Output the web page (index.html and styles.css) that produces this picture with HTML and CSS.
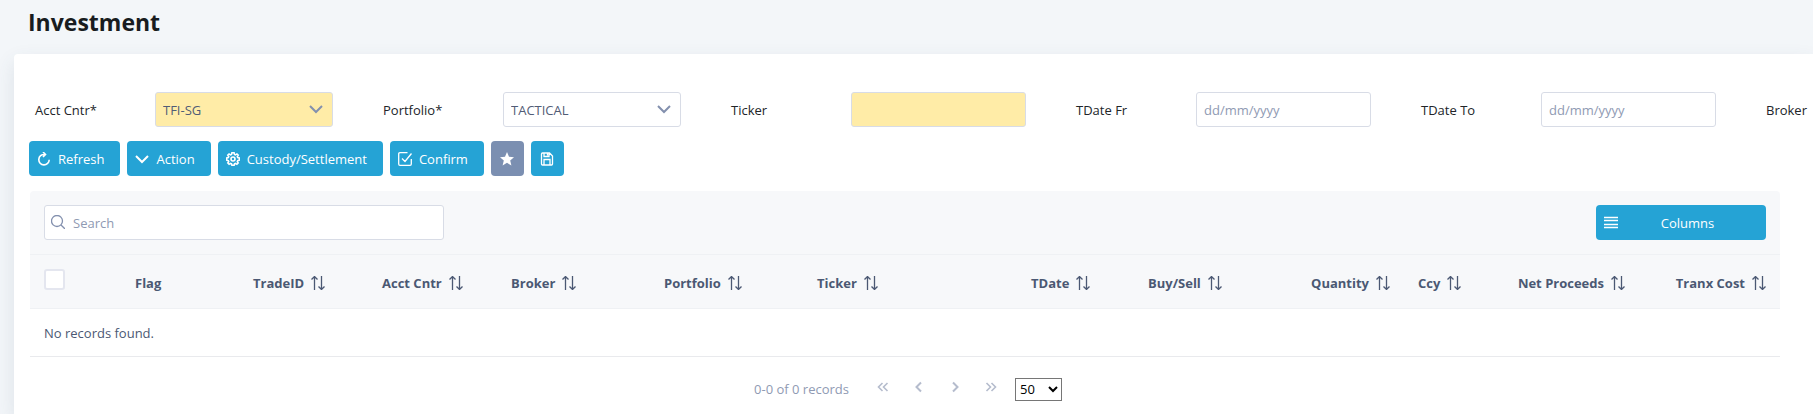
FILE: index.html
```html
<!DOCTYPE html>
<html lang="en">
<head>
    <meta charset="UTF-8">
    <meta name="viewport" content="width=device-width, initial-scale=1.0">
    <title>Investment</title>
    <link rel="stylesheet" href="styles.css">
</head>
<body>
    <!-- shared icons -->
    <svg class="sprite" aria-hidden="true">
        <symbol id="icon-down" viewBox="0 0 14 14"><path d="M1 4l6 6 6-6"/></symbol>
        <symbol id="icon-sort" viewBox="0 0 14 14"><path d="M3.500 14V1M.5 3.500l3-3 3 3M10.500 0v13M7.500 10.500l3 3 3-3"/></symbol>
    </svg>

    <h1 class="page-title">Investment</h1>

    <main class="card">
        <form class="filters">
            <div class="field">
                <label for="acctCntr">Acct Cntr*</label>
                <div class="select-wrap">
                    <select id="acctCntr" class="control select highlight"><option>TFI-SG</option></select>
                    <svg class="icon bold"><use href="#icon-down"/></svg>
                </div>
            </div>
            <div class="field">
                <label for="portfolio">Portfolio*</label>
                <div class="select-wrap">
                    <select id="portfolio" class="control select"><option>TACTICAL</option></select>
                    <svg class="icon bold"><use href="#icon-down"/></svg>
                </div>
            </div>
            <div class="field">
                <label for="ticker">Ticker</label>
                <input type="text" id="ticker" class="control highlight">
            </div>
            <div class="field">
                <label for="tdateFr">TDate Fr</label>
                <input type="text" id="tdateFr" class="control" placeholder="dd/mm/yyyy">
            </div>
            <div class="field">
                <label for="tdateTo">TDate To</label>
                <input type="text" id="tdateTo" class="control" placeholder="dd/mm/yyyy">
            </div>
            <div class="field">
                <label for="broker">Broker</label>
                <input type="text" id="broker" class="control">
            </div>
        </form>

        <div class="toolbar">
            <button type="button" class="btn">
                <svg class="icon medium" viewBox="0 0 14 14"><path d="M7.500 2.500a5.200 5.200 0 1 0 4.700 5.200M6 0l2.500 2.500L6 5"/></svg>
                Refresh
            </button>
            <button type="button" class="btn">
                <svg class="icon bold"><use href="#icon-down"/></svg>
                Action
            </button>
            <button type="button" class="btn">
                <svg class="icon medium" viewBox="0 0 14 14"><path d="M5.900.8h2.200l.4 1.600 1 .4 1.400-.9 1.300 1.300-.9 1.400.4 1 1.600.4v2.200l-1.600.4-.4 1 .9 1.400-1.300 1.300-1.400-.9-1 .4-.4 1.500H5.900l-.4-1.500-1-.4-1.400.9-1.300-1.300.9-1.400-.4-1-1.600-.4V6l1.600-.4.4-1-.9-1.400 1.300-1.300 1.400.9 1-.4z"/><circle cx="7" cy="7" r="2"/></svg>
                Custody/Settlement
            </button>
            <button type="button" class="btn">
                <svg class="icon" viewBox="0 0 14 14"><path d="M9.500.7H2Q.7.700.7 2v10q0 1.300 1.300 1.300h10q1.300 0 1.300-1.300V7M4 6.500l3 3 6.500-8"/></svg>
                Confirm
            </button>
            <button type="button" class="btn btn-icon btn-muted" aria-label="Favourite">
                <svg class="icon solid" viewBox="0 0 14 14"><path d="M7 0l2 4.700 5 .5-3.800 3.300 1.200 5L7 10.800l-4.400 2.700 1.200-5L0 5.200l5-.5z"/></svg>
            </button>
            <button type="button" class="btn btn-icon" aria-label="Save">
                <svg class="icon" viewBox="0 0 14 14"><path d="M1.500 2q0-1 1-1h7l3 3v8q0 1-1 1h-9q-1 0-1-1zM4 1v3.500h5V1M7.500 1.500V3.500M4 13V7.500h6V13"/></svg>
            </button>
        </div>

        <section class="grid">
            <div class="grid-header">
                <div class="search">
                    <svg class="icon" viewBox="0 0 14 14"><circle cx="6" cy="6" r="5.500"/><path d="M10 10l4 4"/></svg>
                    <input type="text" class="control" placeholder="Search" aria-label="Search">
                </div>
                <button type="button" class="btn btn-columns">
                    <svg class="icon" viewBox="0 0 14 14"><path d="M0 1.500h14M0 4.500h14M0 8.500h14M0 11.500h14"/></svg>
                    <span>Columns</span>
                </button>
            </div>
            <table>
                <colgroup>
                    <col class="col-check"><col class="col-flag"><col class="col-id"><col class="col-id">
                    <col class="col-name"><col class="col-name"><col class="col-ticker"><col class="col-date">
                    <col class="col-id"><col class="col-num"><col class="col-ccy"><col class="col-num"><col class="col-num">
                </colgroup>
                <thead>
                    <tr>
                        <th><input type="checkbox" class="check" aria-label="Select all"></th>
                        <th>Flag</th>
                        <th>TradeID<svg class="icon"><use href="#icon-sort"/></svg></th>
                        <th>Acct Cntr<svg class="icon"><use href="#icon-sort"/></svg></th>
                        <th>Broker<svg class="icon"><use href="#icon-sort"/></svg></th>
                        <th>Portfolio<svg class="icon"><use href="#icon-sort"/></svg></th>
                        <th>Ticker<svg class="icon"><use href="#icon-sort"/></svg></th>
                        <th>TDate<svg class="icon"><use href="#icon-sort"/></svg></th>
                        <th>Buy/Sell<svg class="icon"><use href="#icon-sort"/></svg></th>
                        <th class="num">Quantity<svg class="icon"><use href="#icon-sort"/></svg></th>
                        <th>Ccy<svg class="icon"><use href="#icon-sort"/></svg></th>
                        <th class="num">Net Proceeds<svg class="icon"><use href="#icon-sort"/></svg></th>
                        <th class="num">Tranx Cost<svg class="icon"><use href="#icon-sort"/></svg></th>
                    </tr>
                </thead>
                <tbody>
                    <tr><td colspan="13">No records found.</td></tr>
                </tbody>
            </table>
            <div class="pager">
                <span class="pager-info">0-0 of 0 records</span>
                <button type="button" class="page-btn" aria-label="First page" disabled><svg class="icon medium" viewBox="0 0 14 14"><path d="M6.500 3l-4 4 4 4M11.500 3l-4 4 4 4"/></svg></button>
                <button type="button" class="page-btn" aria-label="Previous page" disabled><svg class="icon bold" viewBox="0 0 14 14"><path d="M9 2.500L4.500 7 9 11.500"/></svg></button>
                <button type="button" class="page-btn" aria-label="Next page" disabled><svg class="icon bold" viewBox="0 0 14 14"><path d="M5 2.500L9.500 7 5 11.500"/></svg></button>
                <button type="button" class="page-btn" aria-label="Last page" disabled><svg class="icon medium" viewBox="0 0 14 14"><path d="M2.500 3l4 4-4 4M7.500 3l4 4-4 4"/></svg></button>
                <select class="page-size" aria-label="Rows per page"><option>50</option></select>
            </div>
        </section>
    </main>
</body>
</html>
```

FILE: styles.css
```css
* {
    box-sizing: border-box;
}
body {
    display: flex;
    flex-direction: column;
    min-height: 100vh;
    margin: 0;
    background: #f3f6f9;
    color: #212529;
    font-family: "Open Sans", "Noto Sans", sans-serif;
    font-size: 13px;
    line-height: 20px;
    overflow-x: hidden;
}
button, input, select {
    font: inherit;
}
.sprite {
    display: none;
}
.icon {
    width: 14px;
    height: 14px;
    flex: none;
    fill: none;
    stroke: currentColor;
    stroke-width: 1.3;
}
.icon.medium {
    stroke-width: 1.6;
}
.icon.bold {
    stroke-width: 2;
}
.icon.solid {
    fill: currentColor;
    stroke: none;
}
.page-title {
    margin: 0;
    padding: 6px 28px 16px;
    font-size: 23px;
    line-height: 32px;
    font-weight: 700;
    color: #181c20;
}
.card {
    flex: 1;
    margin-left: 14px;
    padding: 38px 0 0 15px;
    background: #fff;
    border-radius: 4px 0 0 0;
    box-shadow: 0 8px 20px rgba(60, 80, 110, 0.12);
}

/* filter row runs off the right side on narrow screens */
.filters {
    display: flex;
    gap: 50px;
    padding-left: 6px;
    overflow: hidden;
}
.field {
    display: flex;
    align-items: center;
    flex: none;
}
.field label {
    width: 120px;
}
.control {
    width: 175px;
    height: 35px;
    padding: 0 7px;
    border: 1px solid #d8dce6;
    border-radius: 3px;
    background: #fff;
    color: #515c76;
}
.control::placeholder {
    color: #8f9ab3;
    opacity: 1;
}
.control.highlight {
    background: #ffeca7;
}
.select-wrap {
    position: relative;
}
.select {
    width: 178px;
    appearance: none;
}
.select-wrap .icon {
    position: absolute;
    top: 10px;
    right: 10px;
    color: #8390ae;
    pointer-events: none;
}

.toolbar {
    display: flex;
    gap: 7px;
    margin: 14px 0 15px;
}
.btn {
    display: flex;
    align-items: center;
    gap: 7px;
    height: 35px;
    padding: 0 16px 0 8px;
    border: 0;
    border-radius: 4px;
    background: #25a3d5;
    color: #fff;
    cursor: pointer;
}
.btn-icon {
    width: 33px;
    padding: 0;
    justify-content: center;
}
.btn-muted {
    background: #7b8fb1;
}

.grid {
    margin: 0 33px 0 1px;
    color: #4b5873;
}
.grid-header {
    display: flex;
    justify-content: space-between;
    padding: 14px;
    background: #f7f8fa;
    border-radius: 4px 4px 0 0;
}
.search {
    position: relative;
}
.search .icon {
    position: absolute;
    top: 10px;
    left: 7px;
    color: #8390ae;
}
.search .control {
    width: 400px;
    padding-left: 28px;
}
.btn-columns {
    width: 170px;
    padding-right: 8px;
}
.btn-columns span {
    flex: 1;
    padding-right: 8px;
    text-align: center;
}
table {
    width: 100%;
    table-layout: fixed;
    border-collapse: collapse;
}
.col-check { width: 91px; }
.col-flag { width: 118px; }
.col-id { width: 129px; }
.col-name { width: 153px; }
.col-ticker { width: 214px; }
.col-date { width: 117px; }
.col-num { width: 141px; }
.col-ccy { width: 94px; }
th {
    height: 54px;
    padding: 2px 14px 0;
    border-top: 1px solid #eff1f4;
    border-bottom: 1px solid #eff1f4;
    background: #f7f8fa;
    font-weight: 700;
    text-align: left;
    white-space: nowrap;
}
th .icon {
    margin-left: 7px;
    vertical-align: -2px;
}
.num {
    text-align: right;
}
.check {
    display: block;
    width: 21px;
    height: 21px;
    margin: 0 0 6px;
    appearance: none;
    border: 2px solid #e4e6ef;
    border-radius: 3px;
    background: #fff;
}
.check:checked {
    background: #25a3d5;
}
td {
    height: 48px;
    padding: 0 14px;
    border-bottom: 1px solid #e9eaed;
}
.pager {
    display: flex;
    justify-content: center;
    align-items: center;
    padding: 16px 0 0 6px;
    color: #8f9ab3;
}
.pager-info {
    margin-right: 16px;
}
.page-btn {
    width: 36px;
    height: 32px;
    padding: 6px 11px 10px;
    border: 0;
    background: none;
    color: #b5bccd;
}
.page-size {
    width: 47px;
    height: 23px;
    margin-left: 6px;
    padding: 0;
    border: 1px solid #767676;
    border-radius: 0;
    background: #fff;
    color: #000;
}
```
